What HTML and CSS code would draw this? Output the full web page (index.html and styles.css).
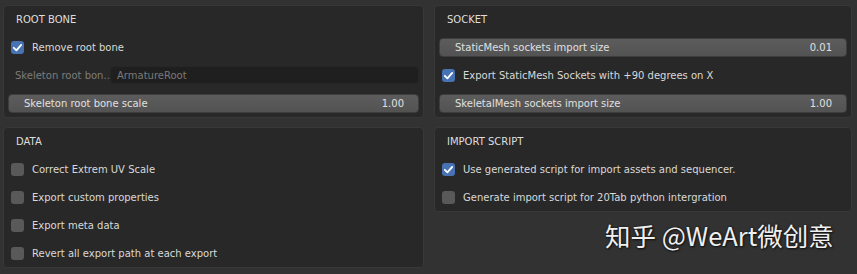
FILE: index.html
```html
<!DOCTYPE html>
<html lang="en">
<head>
	<meta charset="UTF-8">
	<title>Export settings</title>
	<link rel="stylesheet" href="styles.css">
</head>
<body>
	<div class="board">
		<div class="col">
			<div class="panel">
				<div class="row title">ROOT BONE</div>
				<div class="row">
					<span class="check on"><svg viewBox="0 0 12 12"><path d="M2.6 6.3 L5 8.6 L9.4 3.6"/></svg></span>
					<span class="label">Remove root bone</span>
				</div>
				<div class="row">
					<span class="prop-name">Skeleton root bon..</span>
					<span class="field">ArmatureRoot</span>
				</div>
				<div class="row">
					<div class="slider"><span>Skeleton root bone scale</span><span>1.00</span></div>
				</div>
			</div>
			<div class="panel">
				<div class="row title">DATA</div>
				<div class="row">
					<span class="check"></span>
					<span class="label">Correct Extrem UV Scale</span>
				</div>
				<div class="row">
					<span class="check"></span>
					<span class="label">Export custom properties</span>
				</div>
				<div class="row">
					<span class="check"></span>
					<span class="label">Export meta data</span>
				</div>
				<div class="row">
					<span class="check"></span>
					<span class="label">Revert all export path at each export</span>
				</div>
			</div>
		</div>
		<div class="col">
			<div class="panel">
				<div class="row title">SOCKET</div>
				<div class="row">
					<div class="slider"><span>StaticMesh sockets import size</span><span>0.01</span></div>
				</div>
				<div class="row">
					<span class="check on"><svg viewBox="0 0 12 12"><path d="M2.6 6.3 L5 8.6 L9.4 3.6"/></svg></span>
					<span class="label">Export StaticMesh Sockets with +90 degrees on X</span>
				</div>
				<div class="row">
					<div class="slider"><span>SkeletalMesh sockets import size</span><span>1.00</span></div>
				</div>
			</div>
			<div class="panel">
				<div class="row title">IMPORT SCRIPT</div>
				<div class="row">
					<span class="check on"><svg viewBox="0 0 12 12"><path d="M2.6 6.3 L5 8.6 L9.4 3.6"/></svg></span>
					<span class="label">Use generated script for import assets and sequencer.</span>
				</div>
				<div class="row">
					<span class="check"></span>
					<span class="label">Generate import script for 20Tab python intergration</span>
				</div>
			</div>
		</div>
	</div>
	<div class="watermark">知乎 @WeArt微创意</div>
</body>
</html>
```

FILE: styles.css
```css
* {
	margin: 0;
	padding: 0;
	box-sizing: border-box;
}
body {
	width: 857px;
	height: 274px;
	background: #323232;
	font-family: "DejaVu Sans", sans-serif;
	font-size: 10px;
	color: #d9d9d9;
	overflow: hidden;
	position: relative;
}
.board {
	display: grid;
	grid-template-columns: 421px 418px;
	column-gap: 10px;
	padding: 5px 0 0 3px;
}
.col {
	display: flex;
	flex-direction: column;
	gap: 9px;
}
.panel {
	background: #282828;
	border: 1px solid #383838;
	border-radius: 4px;
	padding: 0 4px;
}
.row {
	height: 28px;
	display: flex;
	align-items: center;
}
.panel .row:first-child {
	margin-top: -1px;
}
.title {
	padding-left: 8px;
	color: #dedede;
}
.check {
	width: 13px;
	height: 13px;
	margin-left: 3px;
	margin-right: 8px;
	border-radius: 3px;
	background: #595959;
	flex: none;
	display: flex;
}
.check.on {
	background: #4772b3;
}
.check svg {
	width: 13px;
	height: 13px;
	fill: none;
	stroke: #fff;
	stroke-width: 1.7;
	stroke-linecap: round;
	stroke-linejoin: round;
}
.label {
	color: #d9d9d9;
}
.prop-name {
	width: 102px;
	padding-left: 7px;
	color: #7c7c7c;
	white-space: nowrap;
	flex: none;
}
.field {
	flex: 1;
	height: 18px;
	line-height: 18px;
	background: #1f1f1f;
	border: 1px solid #262626;
	border-radius: 4px;
	padding-left: 6px;
	color: #7a7a7a;
}
.slider {
	flex: 1;
	height: 19px;
	display: flex;
	align-items: center;
	justify-content: space-between;
	padding: 0 14px 0 15px;
	background: linear-gradient(#5c5c5c, #535353);
	border: 1px solid #3d3d3d;
	border-radius: 4px;
	color: #e0e0e0;
}
.watermark {
	position: absolute;
	left: 605px;
	top: 220px;
	font-family: "Noto Sans CJK SC", "DejaVu Sans", sans-serif;
	font-size: 25.5px;
	line-height: 30px;
	color: #efefef;
	text-shadow: 1px 1px 2px #111, 0 0 2px #111;
	white-space: nowrap;
}
```
